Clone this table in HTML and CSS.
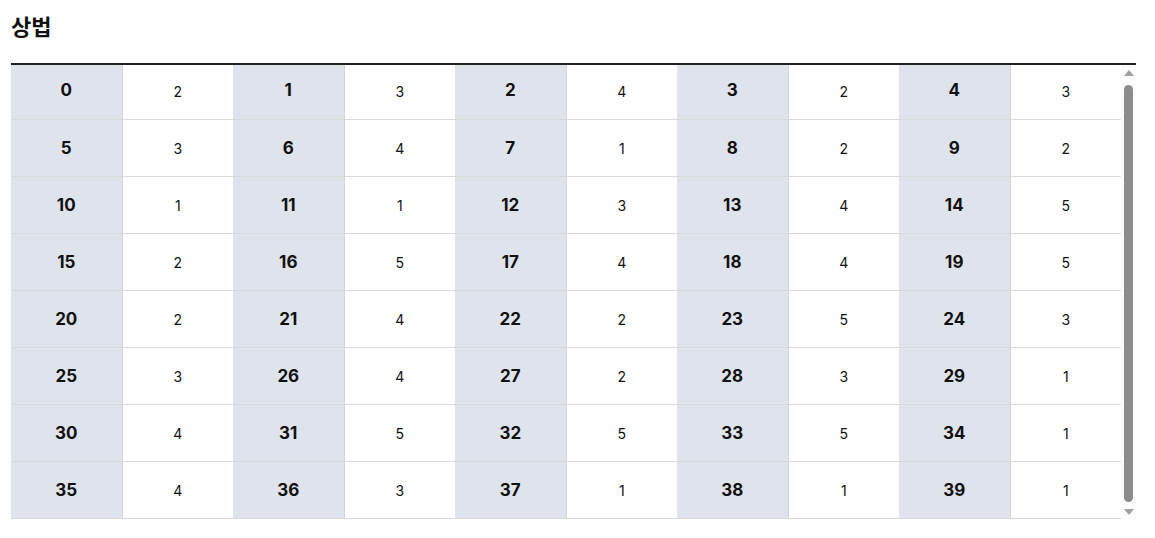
FILE: index.html
```html
<!DOCTYPE html>
<html lang="ko">
<head>
<meta charset="utf-8">
<title>상법</title>
<link rel="stylesheet" href="styles.css">
</head>
<body>
<div class="page">
  <h1 class="title">상법</h1>
  <div class="scroller">
    <div class="scroll-content">
      <table class="grid">
        <tbody>
          <tr><th>0</th><td>2</td><th>1</th><td>3</td><th>2</th><td>4</td><th>3</th><td>2</td><th>4</th><td>3</td></tr>
          <tr><th>5</th><td>3</td><th>6</th><td>4</td><th>7</th><td>1</td><th>8</th><td>2</td><th>9</th><td>2</td></tr>
          <tr><th>10</th><td>1</td><th>11</th><td>1</td><th>12</th><td>3</td><th>13</th><td>4</td><th>14</th><td>5</td></tr>
          <tr><th>15</th><td>2</td><th>16</th><td>5</td><th>17</th><td>4</td><th>18</th><td>4</td><th>19</th><td>5</td></tr>
          <tr><th>20</th><td>2</td><th>21</th><td>4</td><th>22</th><td>2</td><th>23</th><td>5</td><th>24</th><td>3</td></tr>
          <tr><th>25</th><td>3</td><th>26</th><td>4</td><th>27</th><td>2</td><th>28</th><td>3</td><th>29</th><td>1</td></tr>
          <tr><th>30</th><td>4</td><th>31</th><td>5</td><th>32</th><td>5</td><th>33</th><td>5</td><th>34</th><td>1</td></tr>
          <tr><th>35</th><td>4</td><th>36</th><td>3</td><th>37</th><td>1</td><th>38</th><td>1</td><th>39</th><td>1</td></tr>
        </tbody>
      </table>
    </div>
    <div class="scrollbar" aria-hidden="true">
      <div class="sb-button"><span class="arrow-up"></span></div>
      <div class="sb-track"><div class="sb-thumb"></div></div>
      <div class="sb-button"><span class="arrow-down"></span></div>
    </div>
  </div>
</div>
</body>
</html>
```
FILE: styles.css
```css
html, body {
  margin: 0;
  padding: 0;
  background: #ffffff;
}

body {
  font-family: Inter, "Noto Sans CJK KR", sans-serif;
  color: #111111;
}

.page {
  padding: 10px 19px 0 11px;
}

.title {
  margin: 0;
  font-family: "Noto Sans CJK KR", sans-serif;
  font-size: 22px;
  line-height: 30px;
  font-weight: 700;
  color: #111111;
}

.scroller {
  margin-top: 23px;
  width: 1125px;
  height: 456px;
  box-sizing: border-box;
  border-top: 2px solid #222222;
  display: flex;
}

.scroll-content {
  width: 1110px;
  height: 454px;
  overflow: hidden;
}

.grid {
  margin-top: -3px;
  width: 1110px;
  table-layout: fixed;
  border-collapse: collapse;
}

.grid th,
.grid td {
  width: 111px;
  height: 57px;
  padding: 0;
  text-align: center;
  vertical-align: middle;
  border-bottom: 1px solid #d9d9d9;
  box-sizing: border-box;
}

.grid th {
  background: #dfe3eb;
  font-size: 17px;
  font-weight: 700;
  border-right: 1px solid #d4d4d4;
  color: #111111;
}

.grid td {
  background: #ffffff;
  font-size: 14px;
  font-weight: 400;
  padding-top: 2px;
}

.scrollbar {
  width: 15px;
  height: 454px;
  background: #fbfbfb;
  display: flex;
  flex-direction: column;
}

.sb-button {
  height: 15px;
  flex: 0 0 15px;
  display: flex;
  align-items: center;
  justify-content: center;
}

.arrow-up {
  width: 0;
  height: 0;
  border-left: 5px solid transparent;
  border-right: 5px solid transparent;
  border-bottom: 6px solid #a0a0a0;
}

.arrow-down {
  width: 0;
  height: 0;
  border-left: 5px solid transparent;
  border-right: 5px solid transparent;
  border-top: 6px solid #a0a0a0;
}

.sb-track {
  flex: 1;
  padding: 5px 3px 2px 3px;
  display: flex;
}

.sb-thumb {
  flex: 1;
  background: #8c8c8c;
  border-radius: 5px;
}
```
